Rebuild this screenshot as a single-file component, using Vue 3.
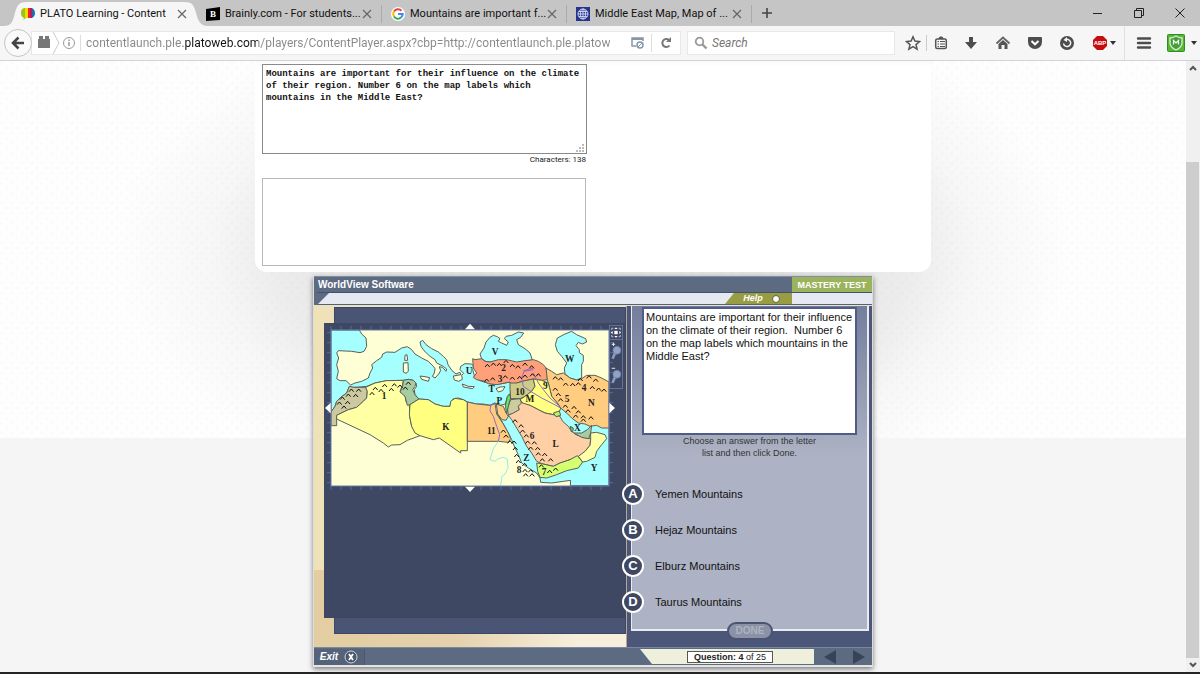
<script setup>
import { ref } from 'vue'

const tabs = [
  { title: 'PLATO Learning - Content', icon: 'plato', active: true },
  { title: 'Brainly.com - For students...', icon: 'brainly' },
  { title: 'Mountains are important f...', icon: 'google' },
  { title: 'Middle East Map, Map of ...', icon: 'globe' },
]
const address = ref('contentlaunch.ple.platoweb.com/players/ContentPlayer.aspx?cbp=http://contentlaunch.ple.platoweb.com')
const search = ref('')
const note = ref('Mountains are important for their influence on the climate\nof their region. Number 6 on the map labels which\nmountains in the Middle East?')
const reply = ref('')

const answers = [
  { letter: 'A', text: 'Yemen Mountains' },
  { letter: 'B', text: 'Hejaz Mountains' },
  { letter: 'C', text: 'Elburz Mountains' },
  { letter: 'D', text: 'Taurus Mountains' },
]

const regions = [
  { fill: '#a6ffff', d: 'M33 36H118L125 48 138 60 140 85 132 100 120 104 95 100 55 98 50 105 56 120 50 140 55 160 50 182 60 188 78 188 92 201 105 195 125 190 145 180 150 165 158 150 155 140 170 128 185 118 188 108 200 102 225 103 245 90 262 86 275 95 285 108 305 120 325 130 340 145 345 152 343 165 337 175 345 180 356 168 362 158 358 146 368 148 378 160 380 153 370 145 350 135 345 125 330 115 312 98 303 85 300 72 308 67 318 80 335 92 355 102 370 115 380 125 384 140 396 158 408 168 420 163 423 170 400 174 403 186 416 190 427 184 425 172 431 166 420 155 422 145 435 137 455 138 461 145 458 155 465 180 480 188 495 193 520 200 545 197 570 192 573 200 572 225 562 238 556 258 540 262 525 255 510 262 490 258 470 258 442 252 430 245 415 240 400 242 392 255 390 265 370 265 345 258 325 245 295 243 285 230 283 215 290 205 288 195 280 187 265 184 250 187 200 188 165 195 140 205 120 207 100 208 88 205 80 225 62 238 50 250 45 265 35 280 33 282Z' },
  { fill: '#a6ffff', d: 'M533 288L550 318 565 345 575 365 585 390 595 410 605 435 625 450 650 465 660 480 662 493 695 495 730 490 752 487 751 503H867V320L722 270 600 290 560 295Z' },
  { fill: '#a6ffff', d: 'M485 122L480 108 492 90 498 72 510 58 520 52 532 56 540 62 535 70 545 75 560 82 565 72 553 62 558 55 575 52 595 42 611 45 602 58 590 65 595 80 615 92 630 105 637 126 600 135 550 130 500 132Z' },
  { fill: '#a6ffff', d: 'M712 60L735 48 755 40 770 50 797 62 800 72 787 78 775 73 768 83 778 95 778 104 790 112 790 130 785 140 785 180 770 186 750 180 735 168 733 150 740 135 725 115 712 100 706 80Z' },
  { fill: '#ccc9a0', d: 'M88 205L100 208 137 208 142 220 140 240 130 250 110 268 85 275 50 292V323H33V282L45 265 50 250 62 238 80 225Z' },
  { fill: '#ffffa3', d: 'M137 208L165 195 200 188 250 187 248 200 240 220 255 232 258 250 268 262 270 300 275 325 285 342 300 353 262 367 240 380 215 381 205 387 190 375 150 350 50 303V292L85 275 110 268 130 250 140 240 142 220Z' },
  { fill: '#a6cca0', d: 'M250 187L265 184 280 187 288 195 285 205 278 215 285 230 297 243 270 260 262 262 255 235 240 222 248 205Z' },
  { fill: '#ffff80', d: 'M270 260L297 243 325 245 345 258 370 265 390 265 392 250 405 241 430 245 442 252V398H422V405L358 360 340 365 300 353 285 345 275 325 268 290Z' },
  { fill: '#ffcc80', d: 'M442 252L470 258 510 262 525 255 530 288 550 318 565 345 572 362 565 373 535 370H442Z' },
  { fill: '#ffcc80', d: 'M529 258L540 262 550 265 558 285 565 295 558 307 546 305 533 288Z' },
  { fill: '#ffa07a', d: 'M458 122L465 125 485 122 495 130 510 132 535 125 560 125 590 132 615 128 640 125 655 130 670 140 678 150 682 165 682 185 665 187 640 183 615 188 590 195 575 200 570 192 555 195 530 200 505 197 495 190 470 185 460 178 470 165 460 150Z' },
  { fill: '#ffcc80', d: 'M678 150L695 160 710 170 730 165 750 180 770 186 785 182 800 172 825 172 845 180 867 192V330L845 330 830 322 810 325 795 318 775 315 755 300 740 285 722 270 712 255 695 235 690 215 685 195 682 185Z' },
  { fill: '#cccc88', d: 'M570 195L590 195 615 188 640 183 645 205 635 220 615 235 600 242 572 242 570 215Z' },
  { fill: '#ffff80', d: 'M640 183L665 187 685 195 690 215 695 235 712 255 722 270 718 282 700 290 675 285 655 275 630 262 610 258 600 245 615 235 635 220 645 205Z' },
  { fill: '#cccca0', d: 'M572 245L600 242 605 258 595 265 598 275 578 288 565 290 562 270Z' },
  { fill: '#66e066', d: 'M568 228L572 240 565 265 560 288 556 262 562 235Z' },
  { fill: '#ffcfa6', d: 'M580 285L598 275 595 265 605 254 630 262 655 275 675 285 700 290 720 295 728 310 745 325 755 340 768 350 790 358 812 362 810 382 795 400 780 415 750 425 720 435 700 445 665 437 650 430 635 405 620 385 605 355 590 330 575 305 565 292Z' },
  { fill: '#d4ff70', d: 'M650 435L665 437 700 445 720 435 750 425 772 413 788 432 775 450 740 458 710 470 680 480 660 478 653 460Z' },
  { fill: '#ffffa6', d: 'M812 345L830 343 855 350 860 362 845 380 830 400 825 418 800 430 788 432 775 415 795 400 810 382 812 365Z' },
  { fill: '#a6cca0', d: 'M762 345L785 345 802 335 815 322 812 345 806 362 785 358Z' },
  { fill: '#66cc80', d: 'M751 325L760 330 758 342 753 340Z' },
  { fill: '#b8f070', d: 'M700 285L718 279 722 292 708 296Z' },
  { fill: '#ffffd6', d: 'M250 135L264 134 265 160 258 166 250 162Z' },
  { fill: '#ffffd6', d: 'M255 112L261 110 263 127 254 127Z' },
  { fill: '#ffffd6', d: 'M300 174L315 176 329 179 325 190 305 184Z' },
  { fill: '#ffffd6', d: 'M427 198L445 205 463 206 458 212 430 207Z' },
  { fill: '#ffffd6', d: 'M528 212L540 207 555 206 548 218 535 222Z' },
]

const peaks = [
  [94,216],[116,216],[85,231],[107,232],[67,240],[58,255],[83,253],[72,267],
  [194,202],[223,200],[166,211],[214,214],[156,226],[183,217],[240,204],[265,195],[256,210],
  [502,142],[520,138],[538,139],[558,130],[577,142],[594,146],[615,138],[635,146],
  [500,186],[518,182],[556,176],[577,180],[599,178],[615,174],[637,170],[655,170],
  [706,179],[722,182],[781,184],[807,176],[827,186],[737,198],[758,199],[775,197],[817,208],[836,213],[852,216],
  [706,213],[715,229],[722,245],[736,264],[762,268],[744,278],[775,281],[767,294],[790,296],[813,299],[790,306],
  [585,308],[603,323],[608,339],[619,353],[623,372],[643,374],[632,390],[653,391],[655,407],[674,409],[667,425],[692,425],
  [550,339],[558,354],[570,371],[582,372],[586,391],[590,412],[595,430],[614,439],[615,457],[632,458],[617,470],[636,470],
  [664,443],[689,460],[707,453],
]

const labels = [
  ['1',192,243],['K',378,337],['U',447,168],['V',525,110],['2',551,160],['3',540,192],['T',515,223],['P',538,258],
  ['10',600,230],['M',630,253],['9',676,212],['W',749,133],['4',792,220],['5',741,253],['N',814,264],['X',772,338],
  ['11',514,347],['6',636,362],['L',707,387],['Z',619,429],['Y',822,460],['8',597,465],['7',672,472],
]
const ticksX = Array.from({ length: 28 }, (_, i) => 33 + i * 30)
const ticksY = Array.from({ length: 16 }, (_, i) => 44 + i * 30)
</script>

<template>
  <div class="browser">
    <header class="tabstrip">
      <div v-for="t in tabs" :key="t.title" class="tab" :class="{ active: t.active }">
        <svg v-if="t.active" class="shape" viewBox="0 0 204 26" preserveAspectRatio="none" aria-hidden="true">
          <path d="M0 26C8 26 9 20 11 13C13 5 15 2 23 2H180C188 2 190 5 192 13C194 20 196 26 204 26Z" fill="#f6f6f6" />
        </svg>
        <svg v-if="t.icon === 'plato'" class="fav" viewBox="0 0 14 14" aria-hidden="true">
          <path d="M5 1C1 1 0 3 0 6s1 4 3 5l-1 2 3-2Z" fill="#9ac31c" />
          <path d="M4 1h3v10H4Z" fill="#f5d800" /><path d="M7 1h2v10H7Z" fill="#e8252a" />
          <path d="M9 1h2v10H9Z" fill="#b51a6a" /><path d="M11 1c2 1 3 3 3 5s-1 4-3 5Z" fill="#1c69b5" />
        </svg>
        <svg v-else-if="t.icon === 'brainly'" class="fav" viewBox="0 0 14 14" aria-hidden="true">
          <path d="M0 2L14 0V13L0 14Z" fill="#000" />
          <text x="7" y="10" text-anchor="middle" class="favletter">B</text>
        </svg>
        <svg v-else-if="t.icon === 'google'" class="fav" viewBox="0 0 14 14" aria-hidden="true">
          <circle cx="7" cy="7" r="7" fill="#fff" />
          <g fill="none" stroke-width="2">
            <path d="M10.500 3.700A4.700 4.700 0 0 0 3 4.500" stroke="#ea4335" />
            <path d="M3 4.500A4.700 4.700 0 0 0 3 9.500" stroke="#fbbc05" />
            <path d="M3 9.500A4.700 4.700 0 0 0 10 10.600" stroke="#34a853" />
            <path d="M10 10.600A4.700 4.700 0 0 0 11.700 7H7" stroke="#4285f4" />
          </g>
        </svg>
        <svg v-else class="fav" viewBox="0 0 14 14" aria-hidden="true">
          <rect width="14" height="14" fill="#26348c" />
          <g fill="none" stroke="#c8d0f0"><circle cx="7" cy="7" r="5" /><ellipse cx="7" cy="7" rx="2.500" ry="5" /><path d="M7 2V12M2 7H12M3 4.500H11M3 9.500H11" /></g>
        </svg>
        <span class="title">{{ t.title }}</span>
        <button class="close" :aria-label="'Close ' + t.title">
          <svg viewBox="0 0 10 10" width="10" height="10"><path d="M1 1L9 9M9 1L1 9" stroke="#666" stroke-width="1.200" /></svg>
        </button>
      </div>
      <button class="newtab" aria-label="New tab"><svg viewBox="0 0 12 12" width="12" height="12"><path d="M6 1V11M1 6H11" stroke="#444" stroke-width="1.600" /></svg></button>
      <div class="wincontrols">
        <button aria-label="Minimize"><svg viewBox="0 0 10 10" width="10" height="10"><path d="M0 5.500H9" stroke="#222" /></svg></button>
        <button aria-label="Restore"><svg viewBox="0 0 10 10" width="10" height="10"><path d="M.5 2.500H7.500V9.500H.5ZM2.500 2.500V.5H9.500V7.500H7.500" fill="none" stroke="#222" /></svg></button>
        <button aria-label="Close window"><svg viewBox="0 0 10 10" width="10" height="10"><path d="M.5 .5L9.500 9.500M9.500 .5L.5 9.500" stroke="#222" /></svg></button>
      </div>
    </header>

    <nav class="toolbar">
      <button class="back" aria-label="Back"><svg viewBox="0 0 14 14" width="14" height="14"><path d="M7.500 1.500L2 7L7.500 12.500M2.500 7H13" fill="none" stroke="#444" stroke-width="2.600" /></svg></button>
      <div class="urlbar">
        <svg class="identity" viewBox="0 0 46 24" aria-hidden="true">
          <path d="M5 8H17V17H5ZM6 5H10V8H6ZM12 5H16V8H12Z" fill="#777" />
          <path d="M20 1L26 12L20 23" fill="none" stroke="#ccc" />
          <circle cx="36" cy="12" r="5.500" fill="none" stroke="#999" /><path d="M36 11V15M36 8.500V10" stroke="#888" stroke-width="1.300" />
        </svg>
        <input v-model="address" class="address" aria-label="Address" spellcheck="false" />
        <button class="reader" aria-label="Reader view"><svg viewBox="0 0 14 14" width="14" height="14"><path d="M5 10H1V2H12V5" fill="none" stroke="#8797a5" stroke-width="1.500" /><path d="M1 3H12" stroke="#8797a5" stroke-width="2" /><circle cx="9" cy="9" r="3" fill="#fff" stroke="#8797a5" stroke-width="1.500" /><path d="M7 11L11 7" stroke="#8797a5" /></svg></button>
        <button class="reload" aria-label="Reload"><svg viewBox="0 0 12 12" width="12" height="12"><path d="M9.500 8.500A4 4 0 1 1 9 3" fill="none" stroke="#777" stroke-width="2" /><path d="M11 0V5H6Z" fill="#777" /></svg></button>
      </div>
      <div class="searchbar">
        <svg viewBox="0 0 14 14" width="14" height="14" aria-hidden="true"><circle cx="5.500" cy="5.500" r="3.800" fill="none" stroke="#999" stroke-width="1.800" /><path d="M8 8L12.500 12.500" stroke="#999" stroke-width="2.400" /></svg>
        <input v-model="search" placeholder="Search" aria-label="Search" />
      </div>
      <div class="tools">
        <button class="star" aria-label="Bookmark"><svg viewBox="0 0 16 16"><path d="M8 1.800L9.900 6.100 14.500 6.500 11 9.600 12.100 14.200 8 11.700 3.900 14.200 5 9.600 1.500 6.500 6.100 6.100Z" fill="none" stroke="#555" stroke-width="1.500" /></svg></button>
        <button aria-label="Bookmarks list"><svg viewBox="0 0 16 16"><rect x="2.700" y="4" width="10.600" height="9.500" rx="1.500" fill="none" stroke="#555" stroke-width="1.500" /><path d="M5.500 4C5.500 2 7 1.500 8 1.500S10.500 2 10.500 4Z" fill="#555" /><path d="M4.500 6.500H6M7 6.500H12M4.500 9H6M7 9H12M4.500 11.500H6M7 11.500H12" stroke="#555" stroke-width="1.200" /></svg></button>
        <button aria-label="Downloads"><svg viewBox="0 0 16 16"><path d="M6 2H10V7H14L8 14L2 7H6Z" fill="#4d4d4d" /></svg></button>
        <button aria-label="Home"><svg viewBox="0 0 16 16"><path d="M1.500 8.500L8 2.500L14.500 8.500" fill="none" stroke="#666" stroke-width="1.800" /><path d="M3.500 9L8 5L12.500 9V14H9.500V10H6.500V14H3.500Z" fill="#555" /></svg></button>
        <button aria-label="Pocket"><svg viewBox="0 0 16 16"><path d="M2 2H14Q15 2 15 3V7A7 7 0 0 1 1 7V3Q1 2 2 2Z" fill="#4d4d4d" /><path d="M4.500 6L8 9.300L11.500 6" fill="none" stroke="#fff" stroke-width="2" /></svg></button>
        <button aria-label="Sync"><svg viewBox="0 0 16 16"><circle cx="8" cy="8" r="7" fill="#4d4d4d" /><path d="M7 4.500A3.600 3.600 0 1 1 4.500 8.500" fill="none" stroke="#f6f6f6" stroke-width="1.500" /><path d="M8 2V7L4.500 5Z" fill="#f6f6f6" /></svg></button>
        <button class="abp" aria-label="Adblock"><svg viewBox="0 0 16 16"><path d="M5 1H11L15 5V11L11 15H5L1 11V5Z" fill="#c70d0d" /><text x="8" y="10" text-anchor="middle" class="abptext">ABP</text></svg><i class="caret"></i></button>
        <button class="menu" aria-label="Menu"><svg viewBox="0 0 16 16"><path d="M2 3.500H14M2 8H14M2 12.500H14" stroke="#4d4d4d" stroke-width="2.400" stroke-linecap="round" /></svg></button>
        <button class="shield" aria-label="WebAdvisor"><svg viewBox="0 0 18 18"><rect x=".5" y=".5" width="17" height="17" rx="1" fill="#58b62f" stroke="#318a2d" /><path d="M3 4Q6 4 9 2Q12 4 15 4V9Q15 13 9 16Q3 13 3 9Z" fill="#479d3d" stroke="#d9f0d0" stroke-width="1.300" /><path d="M6.500 10.500V6.500L9 9L11.500 6.500V10.500" fill="none" stroke="#fff" stroke-width="1.200" /></svg><i class="caret"></i></button>
      </div>
    </nav>

    <div class="viewport">
      <main class="page">
        <section class="sheet">
          <div class="noteWrap">
            <textarea v-model="note" class="note" aria-label="Question text" spellcheck="false"></textarea>
            <svg class="grip" viewBox="0 0 8 8" aria-hidden="true"><path d="M6 0h2v2H6ZM3 3h2v2H3ZM6 3h2v2H6ZM0 6h2v2H0ZM3 6h2v2H3ZM6 6h2v2H6Z" fill="#bbb" /></svg>
          </div>
          <p class="count">Characters: 138</p>
          <textarea v-model="reply" class="reply" aria-label="Answer text"></textarea>
        </section>

        <section class="player">
          <header class="phead">
            <div class="ptitle"><h1>WorldView Software</h1><span class="mastery">MASTERY TEST</span></div>
            <div class="strip"><button class="help">Help <i></i></button></div>
          </header>
          <div class="pbody">
            <div class="left">
              <div class="backplate"></div>
              <div class="mapPanel">
                <svg class="map" viewBox="12 15 906 510" role="img" aria-label="Map of the Middle East and North Africa">
                  <g stroke="#57689c" stroke-width="3">
                    <path v-for="x in ticksX" :key="'x' + x" :d="`M${x} 24V36M${x} 504V516`" />
                    <path v-for="y in ticksY" :key="'y' + y" :d="`M21 ${y}H33M867 ${y}H879`" />
                  </g>
                  <rect x="33" y="36" width="834" height="468" fill="#ffffd6" />
                  <path v-for="(r, i) in regions" :key="i" :d="r.d" :fill="r.fill" stroke="#5a6058" stroke-width="3" stroke-linejoin="round" />
                  <g fill="none" stroke-width="3">
                    <path d="M526 257L512 262 510 278 520 295 530 325 539 350 535 370M640 155L612 160 605 180 610 205 635 222 665 240 700 258 722 270M610 158L640 150M640 165L655 195 670 215 690 240 715 262" stroke="#9468c8" />
                    <path d="M535 370L520 392 510 425 525 430 535 422 550 418 562 423 564 450 555 468 546 475 542 503" stroke="#90ecec" />
                    <path v-for="(p, i) in peaks" :key="i" :d="`M${p[0] - 7} ${p[1] + 5}L${p[0]} ${p[1] - 3}L${p[0] + 7} ${p[1] + 5}`" stroke="#111" />
                  </g>
                  <text v-for="l in labels" :key="l[0]" :x="l[1]" :y="l[2]" text-anchor="middle" class="maplabel">{{ l[0] }}</text>
                  <rect x="33" y="36" width="834" height="468" fill="none" stroke="#6478b0" stroke-width="3" />
                  <path d="M450 17L465 34H435ZM450 522L465 506H435ZM15 270L32 254V286ZM885 270L868 254V286Z" fill="#fff" />
                </svg>
                <div class="mapTools">
                  <button aria-label="Fit map"><svg viewBox="0 0 14 14"><rect x="5" y="5" width="4" height="4" fill="#fff" /><path d="M7 1L9 3H5ZM7 13L9 11H5ZM1 7L3 5V9ZM13 7L11 5V9Z" fill="#fff" /><path d="M2 4V2H4M10 2H12V4M12 10V12H10M4 12H2V10" fill="none" stroke="#c9d0e4" /></svg></button>
                  <button class="zoom" aria-label="Zoom in"><svg viewBox="0 0 14 24"><path d="M4 1V5M2 3H6" stroke="#fff" /><path d="M6 13L3 20" stroke="#8d9bc0" stroke-width="3" /><circle cx="8" cy="10" r="4.500" fill="#91a2c8" stroke="#7787b0" /></svg></button>
                  <button class="zoom" aria-label="Zoom out"><svg viewBox="0 0 14 24"><path d="M2 3H6" stroke="#fff" /><path d="M6 13L3 20" stroke="#8d9bc0" stroke-width="3" /><circle cx="8" cy="10" r="4.500" fill="#91a2c8" stroke="#7787b0" /></svg></button>
                </div>
              </div>
            </div>
            <div class="right">
              <div class="quiz">
                <p class="question">Mountains are important for their influence<br />on the climate of their region.&nbsp; Number 6<br />on the map labels which mountains in the<br />Middle East?</p>
                <p class="hint">Choose an answer from the letter<br />list and then click Done.</p>
                <div class="answers">
                  <button v-for="a in answers" :key="a.letter" class="answer"><b>{{ a.letter }}</b><span>{{ a.text }}</span></button>
                </div>
              </div>
              <button class="done" disabled>DONE</button>
            </div>
          </div>
          <footer class="pfoot">
            <button class="exit">Exit <svg viewBox="0 0 14 14" width="14" height="14"><circle cx="7" cy="7" r="6" fill="#4c586e" stroke="#cdd4de" /><path d="M5 4L9 10M9 4L5 10" stroke="#fff" stroke-width="1.800" /></svg></button>
            <div class="progress"><span><b>Question: 4</b> of 25</span></div>
            <div class="steps">
              <button aria-label="Previous"><svg viewBox="0 0 14 14" width="14" height="14"><path d="M1 7L13 0V14Z" fill="#394357" /></svg></button>
              <button aria-label="Next"><svg viewBox="0 0 14 14" width="14" height="14"><path d="M13 7L1 0V14Z" fill="#394357" /></svg></button>
            </div>
          </footer>
        </section>
      </main>
      <aside class="scrollbar" aria-hidden="true">
        <svg viewBox="0 0 14 14"><path d="M4 9L7 6L10 9" fill="none" stroke="#555" stroke-width="2" /></svg>
        <div class="track"><div class="thumb"></div></div>
        <svg viewBox="0 0 14 14"><path d="M4 5L7 8L10 5" fill="none" stroke="#555" stroke-width="2" /></svg>
      </aside>
    </div>
  </div>
</template>

<style>
body { margin: 0; overflow: hidden; }
</style>

<style scoped>
* { box-sizing: border-box; }
button { border: 0; padding: 0; margin: 0; background: none; font: inherit; color: inherit; display: flex; align-items: center; justify-content: center; }
input, textarea { border: 0; padding: 0; margin: 0; outline: 0; background: none; font: inherit; }
p, h1 { margin: 0; }
svg { display: block; flex: none; }
.browser { height: 100vh; display: flex; flex-direction: column; font: 11px/16px Roboto, "Open Sans", sans-serif; color: #222; border-bottom: 2px solid #222428; }

.tabstrip { flex: none; height: 26px; background: #c5c5c5; display: flex; align-items: center; padding-left: 12px; }
.tab { position: relative; width: 185px; height: 26px; display: flex; align-items: center; padding: 2px 9px 0 9px; gap: 5px; color: #111; }
.tab.active { z-index: 1; }
.tab:not(.active)::after { content: ""; position: absolute; right: 0; top: 5px; height: 18px; width: 1px; background: #aaa; }
.shape { position: absolute; left: -8px; top: 0; width: 204px; height: 26px; }
.fav { position: relative; width: 14px; height: 14px; }
.favletter { font: bold 9px "Liberation Serif", serif; fill: #fff; }
.title { position: relative; flex: 1; min-width: 0; white-space: nowrap; }
.close { position: relative; width: 12px; height: 16px; }
.newtab { width: 30px; height: 26px; }
.wincontrols { margin-left: auto; display: flex; }
.wincontrols button { width: 41px; height: 24px; }

.toolbar { flex: none; height: 35px; background: #f6f6f6; border-bottom: 1px solid #d2d2d2; display: flex; align-items: center; padding-left: 4px; }
.back { position: relative; z-index: 1; width: 28px; height: 28px; border-radius: 50%; border: 1px solid #c5c5c5; background: #fafafa; }
.urlbar { flex: 648 1 0; height: 24px; margin-left: -1px; background: #fff; border: 1px solid #e8e8e8; display: flex; align-items: center; }
.identity { width: 46px; height: 24px; margin-left: 1px; }
.address { flex: 1; min-width: 0; height: 16px; margin: 0 20px 0 1px; padding-left: 5px; border-left: 1px solid #ddd; color: transparent; background: linear-gradient(90deg, #888 102px, #111 102px 177px, #888 177px); background-clip: text; -webkit-background-clip: text; font-size: 12px; }
.reader { width: 22px; height: 18px; border-right: 1px solid #ddd; padding-right: 6px; }
.reload { width: 28px; height: 22px; }
.searchbar { flex: 200 1 0; height: 24px; margin-left: 6px; padding-left: 6px; background: #fff; border: 1px solid #e8e8e8; display: flex; align-items: center; gap: 4px; }
.searchbar input { flex: 1; min-width: 0; font-size: 12px; }
.searchbar input::placeholder { color: #777; font-style: italic; opacity: 1; }
.tools { flex: none; display: flex; align-items: center; height: 34px; margin-left: 5px; }
.tools svg { width: 16px; height: 16px; }
.tools button { width: 32px; height: 34px; }
.tools .star { width: 27px; height: 16px; border-right: 1px solid #ccc; }
.tools .star + button { width: 28px; }
.tools .abp { width: 42px; gap: 2px; border-right: 1px solid #e0e0e0; }
.tools .menu { width: 38px; }
.tools .shield { width: 37px; gap: 6px; }
.tools .shield svg { width: 18px; height: 18px; }
.abptext { font: bold 6px "Liberation Sans", sans-serif; fill: #fff; }
.caret { border: 3px solid transparent; border-top: 4px solid #333; border-bottom: 0; }

.viewport { flex: 1; min-height: 0; display: flex; }
.page { flex: 1; min-width: 0; overflow: hidden; background:
  radial-gradient(circle at 2px 2px, rgba(120,120,120,.03) 1px, transparent 2px) 0 0 / 10px 10px,
  radial-gradient(circle at 7px 7px, rgba(120,120,120,.03) 1px, transparent 2px) 0 0 / 10px 10px,
  radial-gradient(ellipse 480px 270px at 50% 190px, #e2e2e2 40%, #ececec 66%, #f7f7f7 80%, #fefefe 100%);
  background-size: 10px 10px, 10px 10px, 100% 377px; background-repeat: repeat, repeat, no-repeat; background-color: #f5f5f5; position: relative; }
.page::before { content: ""; position: absolute; inset: 377px 0 0; background: #f5f5f5; }
.sheet { position: relative; max-width: 676px; margin: 0 auto; padding: 3px 7px 6px; background: linear-gradient(#fafafa, #fff 6px); border-radius: 0 0 12px 12px; }
.noteWrap { position: relative; width: 325px; }
.note { display: block; width: 100%; height: 90px; resize: none; overflow: hidden; border: 1px solid #8a8a8a; background: #fff; padding: 3px; font: bold 9px/12px "Liberation Mono", monospace; color: #111; white-space: pre; }
.grip { position: absolute; right: 3px; bottom: 2px; width: 8px; height: 8px; }
.count { width: 324px; text-align: right; font-size: 8px; line-height: 12px; color: #222; margin-bottom: 12px; }
.reply { display: block; width: 324px; height: 88px; resize: none; border: 1px solid #b8b8b8; background: #fff; }

.player { position: relative; max-width: 560px; margin: 4px auto 0; border: 1px solid #dcdcdc; border-top: 0; border-bottom: 2px solid #e4e4e4; box-shadow: 0 2px 5px rgba(0,0,0,.5); font-family: "Liberation Sans", Arial, sans-serif; background: #4b5678; }
.phead { background: #5c6b82; border-top: 1px solid #7f8ea0; }
.ptitle { display: flex; justify-content: space-between; height: 15px; }
.ptitle h1 { font-size: 10px; line-height: 16px; color: #fff; margin-left: 4px; }
.mastery { width: 80px; text-align: center; background: #9bb35c; color: #fff; font: bold 9px/16px "Liberation Sans", sans-serif; }
.strip { height: 13px; border-bottom: 1px solid #52617d; border-top: 1px solid #44516a; display: flex; justify-content: flex-end; background: linear-gradient(135deg, transparent 0, transparent 8px, #e6e9f2 9px); margin-left: 3px; padding-right: 80px; }
.help { width: 67px; height: 11px; background: #989d43; clip-path: polygon(9px 0, 100% 0, 100% 100%, 0 100%); color: #fff; font: italic bold 9px/11px "Liberation Sans", sans-serif; gap: 9px; padding-left: 6px; }
.help i { width: 8px; height: 8px; border-radius: 50%; background: #fff; border: 1px solid #5d612a; }
.pbody { display: grid; grid-template-columns: 313fr 245fr; height: 342px; border-top: 1px solid #eee3c0; }
.left { min-width: 0; display: grid; background: linear-gradient(90deg, #e3cda1, #e5d1ac 45%, #f7efdc 85%) 0 264px / 100% 78px no-repeat, #f0e2b8; border-right: 1px solid #b5a88f; }
.backplate { grid-area: 1 / 1; margin: 1px 0 13px 20px; background: #4a5475; border: 1px solid #3c4668; }
.mapPanel { grid-area: 1 / 1; position: relative; margin: 17px 0 29px 10px; background: #3f4863; }
.map { width: 100%; height: auto; }
.maplabel { font: bold 28px "Liberation Serif", serif; fill: #222; }
.mapTools { position: absolute; right: 3px; top: 2px; width: 14px; border: 1px solid #65719a; }
.mapTools button { width: 100%; height: 14px; }
.mapTools button:first-child { border-bottom: 1px solid #65719a; }
.mapTools .zoom { height: 24px; }
.mapTools svg { width: 12px; height: 100%; }
.right { min-width: 0; display: flex; flex-direction: column; align-items: center; padding: 0 3px 0 4px; }
.quiz { position: relative; width: 100%; height: 325px; padding: 1px 10px 0; border: 1px solid #e8ebf2; border-top: 0; border-width: 0 2px 2px 1px; background: linear-gradient(#747e9c, #adb3c4 150px); }
.question { height: 128px; border: 2px solid #4e5c87; background: #fff; padding: 2px; font-size: 11px; line-height: 13px; color: #111; white-space: nowrap; }
.hint { text-align: center; font-size: 9px; line-height: 12px; color: #333; }
.answers { margin: 24px 0 0 -20px; height: 130px; display: flex; flex-direction: column; justify-content: space-between; }
.answer { justify-content: flex-start; gap: 11px; font-size: 11px; line-height: 22px; color: #111; }
.answer b { width: 22px; height: 22px; border-radius: 50%; border: 2px solid #fff; background: #3f4863; color: #fff; font-size: 13px; line-height: 18px; text-align: center; }
.done { position: relative; width: 46px; height: 18px; margin-top: -9px; border: 2px solid #4a5472; border-radius: 9px; background: #8b92a7; color: #adb2c1; font-weight: bold; font-size: 10px; line-height: 14px; }
.pfoot { height: 18px; background: #5c6b82; border-top: 1px solid #7889a0; display: flex; align-items: center; color: #fff; }
.exit { font: italic bold 10px/16px "Liberation Sans", sans-serif; gap: 6px; width: 51px; height: 16px; border-right: 1px solid #4c586e; background: #55637a; }
.progress { margin-left: auto; width: 174px; height: 15px; background: #eef0dc; clip-path: polygon(0 0, 100% 0, 100% 100%, 12px 100%); display: flex; align-items: center; justify-content: center; padding-left: 6px; }
.progress span { width: 86px; border: 1px solid #555; background: #fff; color: #222; font-size: 9px; line-height: 10px; text-align: center; white-space: nowrap; }
.steps { display: flex; gap: 15px; padding: 0 6px 0 9px; }

.scrollbar { flex: none; width: 14px; background: #f0f0f0; display: flex; flex-direction: column; }
.track { flex: 1; padding: 87px 1px 0 0; display: flex; }
.thumb { flex: 1; background: #cdcdcd; }
</style>
